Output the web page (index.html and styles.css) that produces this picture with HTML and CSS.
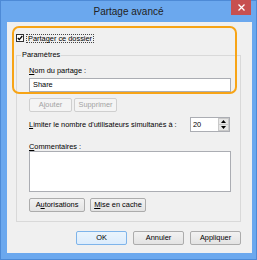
FILE: index.html
```html
<!DOCTYPE html>
<html lang="fr">
<head>
    <meta charset="UTF-8">
    <title>Partage avancé</title>
    <link rel="stylesheet" href="styles.css">
</head>
<body>

<div class="window">
    <div class="titlebar">
        <span></span>
        <span class="title">Partage avancé</span>
        <span class="close">
            <svg width="7" height="7" viewBox="0 0 7 7"><path d="M0.5 0.5 L6.5 6.5 M6.5 0.5 L0.5 6.5" stroke="#fff" stroke-width="1.3"/></svg>
        </span>
    </div>

    <div class="client">
        <div class="highlight"></div>

        <div class="check-row">
            <span class="checkbox">
                <svg width="8" height="8" viewBox="0 0 8 8"><rect x="0.5" y="0.5" width="7" height="7" fill="#fff" stroke="#333"/><path d="M1.8 4 L3.3 5.6 L6.3 2" fill="none" stroke="#000" stroke-width="1.3"/></svg>
            </span>
            <span class="focus">Partager ce dossier</span>
        </div>

        <fieldset class="group">
            <legend>Paramètres</legend>
            <div class="group-body">
                <div class="lbl"><u>N</u>om du partage :</div>
                <div class="field">Share</div>

                <div class="btn-row small">
                    <button class="btn" disabled>A<u>j</u>outer</button>
                    <button class="btn" disabled>Supprimer</button>
                </div>

                <div class="limit-row">
                    <span><u>L</u>imiter le nombre d'utilisateurs simultanés à :</span>
                    <div class="spin">
                        <span class="spin-val">20</span>
                        <span class="spin-btns">
                            <span class="spin-btn"><svg width="5" height="3" viewBox="0 0 5 3"><path d="M2.5 0 L5 3 L0 3 Z" fill="#000"/></svg></span>
                            <span class="spin-btn"><svg width="5" height="3" viewBox="0 0 5 3"><path d="M0 0 L5 0 L2.5 3 Z" fill="#000"/></svg></span>
                        </span>
                    </div>
                </div>

                <div class="lbl comments"><u>C</u>ommentaires :</div>
                <div class="textarea"></div>

                <div class="btn-row wide">
                    <button class="btn">A<u>u</u>torisations</button>
                    <button class="btn"><u>M</u>ise en cache</button>
                </div>
            </div>
        </fieldset>

        <div class="footer">
            <button class="btn default">OK</button>
            <button class="btn">Annuler</button>
            <button class="btn">Appliquer</button>
        </div>
    </div>
</div>

</body>
</html>
```

FILE: styles.css
```css
body {
    margin: 0;
    font-family: "Liberation Sans", Arial, sans-serif;
    font-size: 7.4px;
    color: #000;
}
.window {
    width: 257px;
    height: 260px;
    background-color: #6ba8ee;
    box-shadow: inset 0 0 0 1px #4d8ad6;
    display: flex;
    flex-direction: column;
}
.titlebar {
    height: 22px;
    display: grid;
    grid-template-columns: 1fr auto 1fr;
    align-items: start;
}
.title {
    font-size: 10px;
    line-height: 24px;
    color: #222;
}
.close {
    justify-self: end;
    margin-right: 6px;
    width: 20px;
    height: 15px;
    background-color: #c75050;
    display: flex;
    align-items: center;
    justify-content: center;
}
.client {
    position: relative;
    margin: 0 5px 0 7px;
    height: 231px;
    background-color: #f0f0f0;
    padding-top: 12px;
    box-sizing: border-box;
}
.highlight {
    position: absolute;
    left: 5px;
    top: 4px;
    width: 225px;
    height: 68px;
    box-sizing: border-box;
    border: 2px solid #f7a416;
    border-radius: 7px;
}
.check-row {
    display: flex;
    align-items: center;
    height: 8px;
    margin-left: 9px;
}
.checkbox {
    display: flex;
    width: 8px;
    height: 8px;
}
.focus {
    margin-left: 2px;
    padding: 0 1px;
    line-height: 7px;
    border: 1px dotted #444;
}
.group {
    margin: 9px 0 0 9px;
    width: 225px;
    box-sizing: border-box;
    padding: 8px 9px 9px 4px;
    border: 1px solid #d9d9d9;
    min-width: 0;
}
.group legend {
    padding: 0 1px;
    line-height: 8px;
}
.group-body {
    padding-left: 8px;
}
.lbl {
    line-height: 8px;
}
.field {
    margin-top: 3px;
    height: 14px;
    box-sizing: border-box;
    border: 1px solid #abadb3;
    background-color: #fff;
    padding-left: 3px;
    line-height: 12px;
}
.btn-row {
    display: flex;
    margin-top: 6px;
}
.btn-row.small {
    gap: 2px;
}
.btn-row.small .btn {
    width: 43px;
}
.btn-row.wide {
    gap: 5px;
}
.btn-row.wide .btn {
    width: 56px;
}
.btn {
    height: 14px;
    padding: 0;
    font-family: inherit;
    font-size: 7.4px;
    line-height: 12px;
    color: #000;
    background: linear-gradient(#f2f2f2, #e3e3e3);
    border: 1px solid #acacac;
    border-radius: 2px;
}
.btn:disabled {
    color: #a3a3a3;
    background: #f4f4f4;
    border-color: #cfcfcf;
}
.btn.default {
    background: linear-gradient(#eaf4fc, #dcecfc);
    border-color: #7eb4ea;
}
.limit-row {
    display: flex;
    justify-content: space-between;
    align-items: center;
    margin-top: 5px;
    height: 15px;
}
.spin {
    display: flex;
    width: 40px;
    height: 15px;
    margin-right: 1px;
    box-sizing: border-box;
    border: 1px solid #abadb3;
    background-color: #fff;
}
.spin-val {
    flex: 1;
    padding-left: 2px;
    line-height: 13px;
}
.spin-btns {
    display: flex;
    flex-direction: column;
    width: 11px;
}
.spin-btn {
    flex: 1;
    display: flex;
    align-items: center;
    justify-content: center;
    background-color: #e6e6e6;
    border: 1px solid #c9c9c9;
    margin-top: -1px;
}
.spin-btn:first-child {
    margin-top: 0;
}
.comments {
    margin-top: 11px;
}
.textarea {
    height: 41px;
    box-sizing: border-box;
    border: 1px solid #abadb3;
    background-color: #fff;
}
.footer {
    display: flex;
    justify-content: flex-end;
    gap: 6px;
    margin-top: 9px;
    padding-right: 11px;
}
.footer .btn {
    width: 51px;
}
```
